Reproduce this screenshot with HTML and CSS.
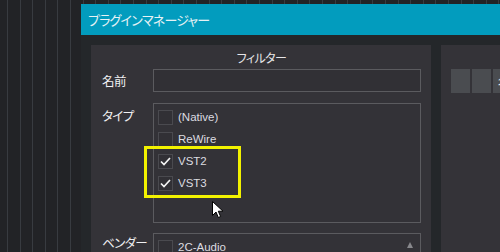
FILE: index.html
```html
<!DOCTYPE html>
<html lang="ja">
<head>
<meta charset="utf-8">
<link rel="stylesheet" href="styles.css">
</head>
<body>
<div class="desk">
  <div class="dialog">
    <div class="titlebar"><span class="jp title">プラグインマネージャー</span></div>
    <div class="content">
      <div class="panel filter">
        <div class="ph"><span class="jp">フィルター</span></div>
        <div class="row name">
          <div class="label jp">名前</div>
          <div class="field"></div>
        </div>
        <div class="row type">
          <div class="label jp">タイプ</div>
          <div class="listbox tall">
            <div class="item"><span class="cb"></span><span class="txt">(Native)</span></div>
            <div class="item"><span class="cb"></span><span class="txt">ReWire</span></div>
            <div class="item"><span class="cb"><svg viewBox="0 0 15 15" width="15" height="15"><polyline points="3,7.5 6,10.5 12,4" /></svg></span><span class="txt">VST2</span></div>
            <div class="item"><span class="cb"><svg viewBox="0 0 15 15" width="15" height="15"><polyline points="3,7.5 6,10.5 12,4" /></svg></span><span class="txt">VST3</span></div>
          </div>
        </div>
        <div class="row vendor">
          <div class="label jp">ベンダー</div>
          <div class="listbox short">
            <div class="item"><span class="cb"></span><span class="txt">2C-Audio</span><span class="up"></span></div>
          </div>
        </div>
      </div>
      <div class="panel plugins">
        <div class="cols">
          <div class="colbtn"></div>
          <div class="colbtn"></div>
          <div class="colbtn"><span class="jp">名前</span></div>
        </div>
      </div>
    </div>
  </div>
</div>
<div class="highlight"></div>
<svg class="cursor" viewBox="0 0 12 18" width="12" height="18"><path d="M0.5 0.5 L0.5 14.5 L4 11 L6.3 16.5 L8.6 15.5 L6.3 10.2 L11 10.2 Z"/></svg>
</body>
</html>
```
FILE: styles.css
```css
html, body {
  margin: 0;
  padding: 0;
}
body {
  width: 500px;
  height: 252px;
  overflow: hidden;
  position: relative;
  background-color: #222326;
  background-image: repeating-linear-gradient(90deg, transparent 0, transparent 7px, #383b40 7px, #383b40 8px, transparent 8px, transparent 12.6px);
  font-family: "Liberation Sans", Arial, sans-serif;
}
.jp {
  font-family: "Noto Sans CJK JP", "Noto Sans", sans-serif;
  font-feature-settings: "palt";
}
.desk {
  padding: 4px 0 0 81px;
}
.dialog {
  width: 419px;
  height: 248px;
  overflow: hidden;
  background: #24272a;
}
.titlebar {
  height: 31px;
  background: #029cbe;
  display: flex;
  align-items: center;
  padding-left: 7px;
}
.title {
  color: #e6f2f5;
  font-size: 13px;
  letter-spacing: -0.8px;
}
.content {
  display: flex;
  gap: 10px;
  padding: 10px 0 0 10px;
}
.panel {
  background: #343338;
  height: 207px;
  overflow: hidden;
}
.filter {
  width: 340px;
  flex-shrink: 0;
  box-sizing: border-box;
  padding: 0 10px 0 11px;
}
.ph {
  height: 24px;
  display: flex;
  align-items: center;
  justify-content: center;
  color: #e6e6e8;
  font-size: 12px;
  letter-spacing: -0.6px;
}
.row {
  display: flex;
}
.label {
  width: 51px;
  color: #f0f0f2;
  font-size: 12.5px;
  letter-spacing: -0.6px;
}
.name {
  align-items: center;
}
.field {
  width: 268px;
  height: 23px;
  box-sizing: border-box;
  border: 1px solid #5b5b5f;
  background: #313035;
}
.type {
  margin-top: 11px;
}
.type .label {
  padding-top: 3px;
}
.vendor {
  margin-top: 10px;
}
.listbox {
  width: 268px;
  box-sizing: border-box;
  border: 1px solid #5b5b5f;
  background: #333237;
  padding: 6px 0 0 4px;
}
.tall {
  height: 120px;
}
.short {
  height: 40px;
  border-bottom: none;
}
.item {
  height: 22px;
  display: flex;
  align-items: flex-start;
  position: relative;
}
.cb {
  width: 15px;
  height: 15px;
  box-sizing: border-box;
  border: 1px solid #4a4a4f;
  background: #313035;
  position: relative;
}
.cb svg {
  position: absolute;
  left: -1px;
  top: -1px;
  fill: none;
  stroke: #f4f4f4;
  stroke-width: 1.7;
}
.txt {
  margin-left: 5px;
  color: #dcdce0;
  font-size: 11.5px;
  line-height: 15px;
}
.up {
  position: absolute;
  right: 7px;
  top: 2px;
  width: 0;
  height: 0;
  border-left: 3.5px solid transparent;
  border-right: 3.5px solid transparent;
  border-bottom: 6px solid #88888c;
}
.plugins {
  flex: 1;
  padding: 24px 0 0 10px;
}
.cols {
  display: flex;
  gap: 2px;
}
.colbtn {
  width: 19px;
  height: 24px;
  background: #4a4c50;
  flex-shrink: 0;
}
.colbtn:last-child {
  width: 40px;
  display: flex;
  align-items: center;
  padding-left: 5px;
  color: #e8e8ea;
  font-size: 12px;
}
.highlight {
  position: absolute;
  left: 144px;
  top: 146px;
  width: 97px;
  height: 52px;
  box-sizing: border-box;
  border: 3px solid #f2f200;
}
.cursor {
  position: absolute;
  left: 212px;
  top: 201px;
}
.cursor path {
  fill: #ffffff;
  stroke: #000000;
  stroke-width: 1;
}
```
